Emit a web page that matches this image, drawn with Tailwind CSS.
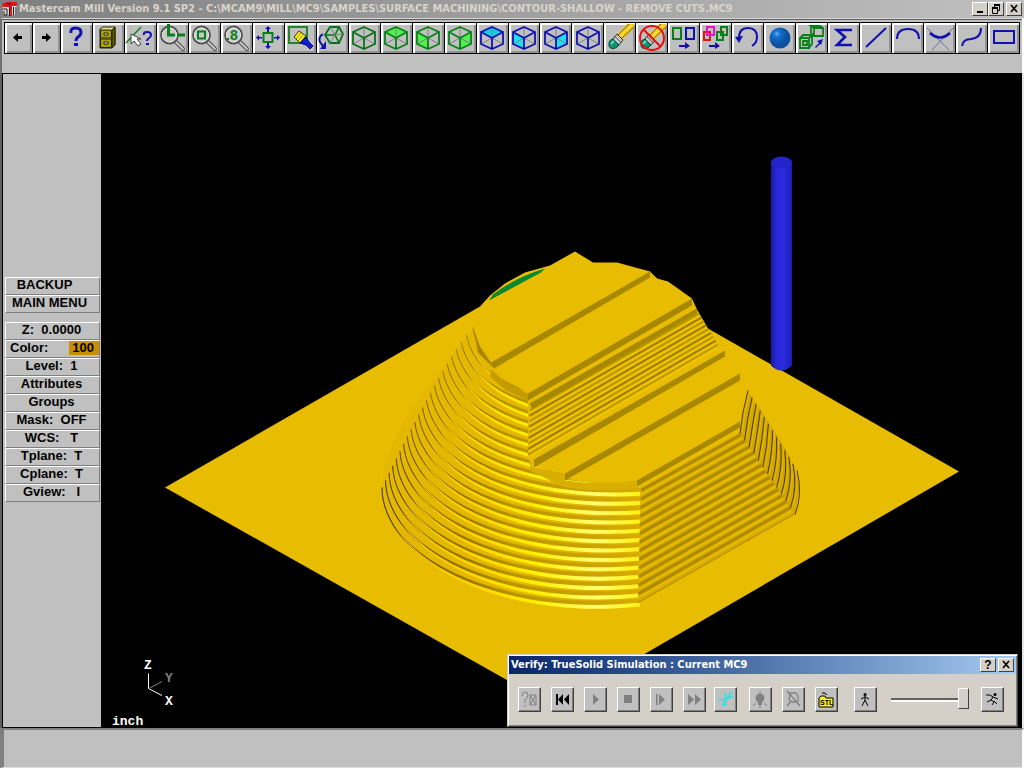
<!DOCTYPE html>
<html lang="en">
<head>
<meta charset="utf-8">
<title>Mastercam Mill Version 9.1 SP2</title>
<script src="https://cdn.jsdelivr.net/npm/@tailwindcss/browser@4"></script>
</head>
<body class="flex h-screen flex-col overflow-hidden bg-[#c0c0c0] font-['Liberation_Sans',Arial,sans-serif] text-black">

<svg class="hidden" aria-hidden="true">
  <symbol id="wire" viewBox="0 0 30 30">
    <path d="M15 4V15M4 21L15 15L26 21" fill="none" stroke="#808080" stroke-width="1"/>
    <path d="M15 4L26 9V21L15 26L4 21V9ZM4 9L15 15L26 9M15 15V26" fill="none" stroke="currentColor" stroke-width="1.8"/>
  </symbol>
  <symbol id="lens" viewBox="0 0 30 30">
    <path d="M19 19L26 26" stroke="#505050" stroke-width="4" stroke-linecap="round"/>
    <path d="M19 19L26 26" stroke="#c8c8c8" stroke-width="2" stroke-linecap="round"/>
    <circle cx="12.500" cy="12" r="8.500" fill="#c8c8c8" stroke="#505050" stroke-width="1.800"/>
    <circle cx="12.500" cy="12" r="7" fill="none" stroke="#e8e8e8"/>
  </symbol>
  <symbol id="pencil" viewBox="0 0 30 30">
    <path d="M12 11L22 1H29V5L17 17Z" fill="#f4c818"/>
    <path d="M13 12L24 1M16 16L29 4" stroke="#806000" stroke-width="1"/>
    <path d="M14.500 14L27 2" stroke="#fff080" stroke-width="1"/>
    <path d="M8 16L12 11L18 17L14 22Z" fill="#c8c8c8" stroke="#303030"/>
    <path d="M10 13.500L16 19.500" stroke="#505050"/>
    <path d="M4 20Q4 17 8 16L14 22Q12 25 9 25.500Q3 26 4 20Z" fill="#109070" stroke="#004838"/>
    <path d="M6 21L9 18" stroke="#60e0b0" stroke-width="2"/>
  </symbol>
</svg>

<header class="flex h-[18px] shrink-0 items-center bg-linear-to-r from-[#808080] to-[#c0c0c0] pl-0.5 pr-0.5">
  <svg class="h-4 w-4 shrink-0" viewBox="0 0 16 16" aria-hidden="true">
    <path d="M1 3H15V14H1Z" fill="#d8d8d8"/><path d="M0 3L5 1H15V5H10V15H7V6H1Z" fill="#d81818"/><path d="M1 8H5V14H2V10M7.500 6V15M11.500 6V14M14 6V14M5 3H9" stroke="#202020" fill="none"/>
  </svg>
  <h1 class="min-w-0 flex-1 overflow-hidden pl-px font-['DejaVu_Sans_Condensed','DejaVu_Sans',sans-serif] text-[11px] leading-4 font-bold whitespace-nowrap text-[#d8d4cc]">Mastercam Mill Version 9.1 SP2 - C:\MCAM9\MILL\MC9\SAMPLES\SURFACE MACHINING\CONTOUR-SHALLOW - REMOVE CUTS.MC9</h1>
  <div class="flex [&>button]:flex [&>button]:h-3.5 [&>button]:w-4 [&>button]:items-center [&>button]:justify-center [&>button]:border [&>button]:border-t-white [&>button]:border-l-white [&>button]:border-r-[#404040] [&>button]:border-b-[#404040] [&>button]:bg-[#d4d0c8]">
    <button aria-label="Minimize"><svg class="h-3 w-3" viewBox="0 0 12 12"><path d="M3 9H9" stroke="#000" stroke-width="2"/></svg></button>
    <button aria-label="Restore"><svg class="h-3 w-3" viewBox="0 0 12 12"><path d="M4 2.500H10M4 1.500H10M4.500 1V4M9.500 1V7.500H8M2 5.500H8M2 4.500H8M2.500 4V10.500H7.500V4" fill="none" stroke="#000"/></svg></button>
    <button class="ml-0.5" aria-label="Close"><svg class="h-3 w-3" viewBox="0 0 12 12"><path d="M3 2L9 9M9 2L3 9" stroke="#000" stroke-width="1.600"/></svg></button>
  </div>
</header>

<nav aria-label="Toolbar" class="h-[55px] shrink-0 border-t border-t-[#d8d8d8] border-r-2 border-r-white border-l-2 border-l-[#707070] pr-0.5 pl-0.5 shadow-[inset_0_1px_#606060]">
  <div class="mt-[3px] flex h-8 gap-px bg-black p-px [&>button]:flex [&>button]:min-w-0 [&>button]:flex-[31_1_0] [&>button]:items-center [&>button]:justify-center [&>button]:overflow-hidden [&>button]:bg-[#c0c0c0] [&>button]:shadow-[inset_2px_2px_#fff,inset_-2px_-2px_#909090] [&>button>svg]:h-[30px] [&>button>svg]:w-[30px] [&>button>svg]:shrink-0">
    <button class="!flex-[27_1_0]" aria-label="Previous"><svg viewBox="0 0 30 30"><path d="M10 14.500L15 10V13H19V16H15V19Z"/></svg></button>
    <button class="!flex-[27_1_0]" aria-label="Next"><svg viewBox="0 0 30 30"><path d="M20 14.500L15 10V13H11V16H15V19Z"/></svg></button>
    <button aria-label="Help"><svg viewBox="0 0 30 30"><path d="M10 10Q9 5 14.500 5Q20 5 20 9.500Q20 12 17 14Q15 15.500 15 18" fill="none" stroke="#1010b0" stroke-width="3"/><rect x="13" y="20" width="4" height="3" fill="#1010b0"/></svg></button>
    <button aria-label="File"><svg viewBox="0 0 30 30"><path d="M7 6L10 4H22V22L19 25H7Z" fill="#e8e4a0" stroke="#202000"/><path d="M19 7L22 4V22L19 25Z" fill="#605c00" stroke="#202000"/><path d="M7.500 7H18.500V15H7.500ZM7.500 16H18.500V24.500H7.500Z" fill="#a8a000" stroke="#202000"/><path d="M11 10H15V12H11ZM11 19H15V21H11Z" fill="#fff" stroke="#202000"/></svg></button>
    <button aria-label="Analyze"><svg viewBox="0 0 30 30"><path d="M1 20L16 4" stroke="#108018" stroke-width="1.500"/><path d="M6 11V21L9 18L13 23L16 21L12 16H16Z" fill="#fff" stroke="#404040"/><path d="M19 12Q18 9 22 9Q26 9 26 12Q26 14 23.500 15.500Q22 16.500 22 18" fill="none" stroke="#1010b0" stroke-width="2"/><path d="M21 20H24V22H21Z" fill="#1010b0"/></svg></button>
    <button aria-label="Zoom window"><svg viewBox="0 0 30 30"><use href="#lens"/><path d="M11.500 1V12H18M20 12H28" fill="none" stroke="#088018" stroke-width="3"/></svg></button>
    <button aria-label="Unzoom"><svg viewBox="0 0 30 30"><use href="#lens"/><rect x="9" y="8.500" width="7" height="7" fill="none" stroke="#088018" stroke-width="2"/></svg></button>
    <button aria-label="Unzoom 0.8"><svg viewBox="0 0 30 30"><use href="#lens"/><text x="9" y="17" font-family="Liberation Sans" font-size="14" font-weight="bold" fill="#088018">8</text><path d="M6 15H8V17H6Z" fill="#088018"/></svg></button>
    <button aria-label="Fit"><svg viewBox="0 0 30 30"><rect x="10.500" y="10" width="9" height="9" fill="none" stroke="#088018" stroke-width="2"/><path d="M15 3L18 6H16V9H14V6H12ZM15 26L18 23H16V20H14V23H12ZM3 14.500L6 12V14H9V15.500H6V17.500ZM27 14.500L24 12V14H21V15.500H24V17.500Z" fill="#1010b0"/></svg></button>
    <button aria-label="Repaint"><svg viewBox="0 0 30 30"><rect x="4" y="4" width="18" height="16" fill="none" stroke="#108018" stroke-width="1.800"/><path d="M9 14L14 8L21 13L15 20Z" fill="#f8f020" stroke="#403800"/><path d="M11 16L17 9M13 18L19 11" stroke="#706800" stroke-width=".7"/><path d="M15 20L21 14L24 19L28 23L25 26L21 22Z" fill="#1020d0" stroke="#000070"/></svg></button>
    <button aria-label="Rotate view"><svg viewBox="0 0 30 30"><path d="M8 12L13 4H22L26 11L22 20H13Z" fill="none" stroke="#087018" stroke-width="1.800"/><path d="M8 12H18L22 4M18 12L22 20" fill="none" stroke="#087018" stroke-width="1.600"/><path d="M13 4L18 12L26 11M18 12L13 20" fill="none" stroke="#609060"/><path d="M6 11Q1 14 3 19L6 23" fill="none" stroke="#1010b0" stroke-width="2"/><path d="M9 18V26H3Z" fill="#1010b0"/></svg></button>
    <button class="text-[#087018]" aria-label="Isometric view"><svg viewBox="0 0 30 30"><use href="#wire"/></svg></button>
    <button class="text-[#088018]" aria-label="Top view"><svg viewBox="0 0 30 30"><path d="M15 4L26 9L15 15L4 9Z" fill="#50f050"/><use href="#wire"/></svg></button>
    <button class="text-[#088018]" aria-label="Front view"><svg viewBox="0 0 30 30"><path d="M4 9L15 15V26L4 21Z" fill="#50f050"/><use href="#wire"/></svg></button>
    <button class="text-[#088018]" aria-label="Side view"><svg viewBox="0 0 30 30"><path d="M26 9L15 15V26L26 21Z" fill="#50f050"/><use href="#wire"/></svg></button>
    <button class="text-[#1010b0]" aria-label="Top plane"><svg viewBox="0 0 30 30"><path d="M15 4L26 9L15 15L4 9Z" fill="#10d0e8"/><use href="#wire"/></svg></button>
    <button class="text-[#1010b0]" aria-label="Front plane"><svg viewBox="0 0 30 30"><path d="M4 9L15 15V26L4 21Z" fill="#20e0f0"/><use href="#wire"/></svg></button>
    <button class="text-[#1010b0]" aria-label="Side plane"><svg viewBox="0 0 30 30"><path d="M26 9L15 15V26L26 21Z" fill="#20e0f0"/><use href="#wire"/></svg></button>
    <button class="text-[#1010b0]" aria-label="3D plane"><svg viewBox="0 0 30 30"><use href="#wire"/></svg></button>
    <button aria-label="Delete"><svg viewBox="0 0 30 30"><use href="#pencil"/></svg></button>
    <button aria-label="Undelete"><svg viewBox="0 0 30 30"><use href="#pencil"/><circle cx="15" cy="15" r="12" fill="none" stroke="#e81010" stroke-width="2"/><path d="M6.500 6.500L23.500 23.500" stroke="#e81010" stroke-width="2"/></svg></button>
    <button aria-label="Copy"><svg viewBox="0 0 30 30"><rect x="4" y="5" width="8" height="11" fill="none" stroke="#088018" stroke-width="2"/><rect x="17" y="5" width="8" height="11" fill="none" stroke="#1010b0" stroke-width="2"/><path d="M10 22H16V19L21 23L16 26V24H10Z" fill="#1010b0"/></svg></button>
    <button aria-label="Translate"><svg viewBox="0 0 30 30"><path d="M3 9H9V17H3Z" fill="none" stroke="#e81010" stroke-width="2"/><path d="M6 4H13V12H6Z" fill="none" stroke="#e810d0" stroke-width="2"/><path d="M16 9H22V17H16ZM20 4H26V12H20Z" fill="none" stroke="#088018" stroke-width="2"/><path d="M8 22H14V19L19 23L14 26V24H8Z" fill="#1010b0"/></svg></button>
    <button aria-label="Undo"><svg viewBox="0 0 30 30"><path d="M6 15Q6 5 15 5Q24 5 24 14Q24 20 19 23" fill="none" stroke="#1010b0" stroke-width="2"/><path d="M2 14L10 13L6 20Z" fill="#1010b0"/></svg></button>
    <button aria-label="Shade"><svg viewBox="0 0 30 30"><defs><radialGradient id="ball" cx=".35" cy=".3"><stop offset="0" stop-color="#58b8f8"/><stop offset=".3" stop-color="#1870d0"/><stop offset="1" stop-color="#0c50a0"/></radialGradient></defs><circle cx="15" cy="15" r="10.500" fill="url(#ball)"/></svg></button>
    <button aria-label="Transform"><svg viewBox="0 0 30 30"><path d="M3 15H12V25H3ZM3 15L6 12H15V21L12 25M12 15L15 12M6 18H10V22H6ZM17 5H26V13H17ZM17 5L14 3H23L26 5M14 3V10L17 13" fill="none" stroke="#088018" stroke-width="1.800"/><path d="M18 24L22 20L20 18L26 16L24 22L23 21L19 25Z" fill="#1010b0"/></svg></button>
    <button aria-label="Sum"><svg viewBox="0 0 30 30"><path d="M23 7H8L16 14L8 22H23" fill="none" stroke="#1010b0" stroke-width="2.600"/></svg></button>
    <button aria-label="Line"><svg viewBox="0 0 30 30"><path d="M5 24L25 5" stroke="#1010b0" stroke-width="2"/></svg></button>
    <button aria-label="Arc"><svg viewBox="0 0 30 30"><path d="M4 16Q4 6 15 6Q26 6 26 16" fill="none" stroke="#1010b0" stroke-width="2"/></svg></button>
    <button aria-label="Fillet"><svg viewBox="0 0 30 30"><path d="M2 5L24 27M28 5L7 27" stroke="#707098"/><path d="M5 10Q15 19 25 10" fill="none" stroke="#1010b0" stroke-width="2.600"/></svg></button>
    <button aria-label="Spline"><svg viewBox="0 0 30 30"><path d="M5 23Q6 16 14 16Q24 15 24 5" fill="none" stroke="#1010b0" stroke-width="2"/></svg></button>
    <button aria-label="Rectangle"><svg viewBox="0 0 30 30"><rect x="5" y="8" width="20" height="12" fill="none" stroke="#1010b0" stroke-width="2"/></svg></button>
  </div>
</nav>

<main class="flex min-h-0 flex-1 border-r-2 border-l-2 border-r-[#e8e8e8] border-l-[#606060]">
  <aside class="w-[99px] shrink-0 border-t border-b border-l border-black pt-[203px] pr-px pl-0.5 text-[13px] font-bold">
    <div class="flex flex-col [&>button]:flex [&>button]:h-[18px] [&>button]:items-center [&>button]:justify-center [&>button]:border [&>button]:border-t-white [&>button]:border-l-white [&>button]:border-r-[#808080] [&>button]:border-b-[#808080] [&>button]:leading-[14px] [&>button]:pb-0.5 [&>button]:whitespace-pre">
      <button class="pr-4">BACKUP</button>
      <button class="pr-1.5">MAIN MENU</button>
      <button class="mt-[9px] pr-0.5">Z:  0.0000</button>
      <button class="!justify-between pl-1"><span>Color:</span><span class="bg-[#c89000] pr-[5px] pl-[3px]">100</span></button>
      <button class="pr-0.5">Level:  1</button>
      <button class="pr-0.5">Attributes</button>
      <button class="pr-0.5">Groups</button>
      <button class="pr-0.5">Mask:  OFF</button>
      <button class="pr-0.5">WCS:   T</button>
      <button class="pr-0.5">Tplane:  T</button>
      <button class="pr-0.5">Cplane:  T</button>
      <button class="pr-0.5">Gview:   I</button>
    </div>
  </aside>

  <section aria-label="Graphics view" class="relative min-w-0 flex-1 bg-black">
    <svg class="block h-full w-full" viewBox="101 73 921 654" role="img" aria-label="Machined part">
      <defs>
        <linearGradient id="rod"><stop offset="0" stop-color="#1818a0"/><stop offset=".25" stop-color="#2828d8"/><stop offset=".6" stop-color="#2c2ce0"/><stop offset="1" stop-color="#1c1cb0"/></linearGradient>
        <linearGradient id="shine" gradientUnits="userSpaceOnUse" x1="382" y1="0" x2="642" y2="0"><stop offset="0" stop-color="#e8bc00"/><stop offset=".3" stop-color="#ffd000"/><stop offset=".6" stop-color="#fff000"/><stop offset=".82" stop-color="#ffff70"/><stop offset="1" stop-color="#fff010"/></linearGradient>
        <linearGradient id="groove" gradientUnits="userSpaceOnUse" x1="382" y1="0" x2="642" y2="0"><stop offset="0" stop-color="#382800"/><stop offset=".2" stop-color="#806400"/><stop offset=".5" stop-color="#b89400"/><stop offset="1" stop-color="#d8ac00"/></linearGradient>
      </defs>
      <path fill="#e8bc00" d="M165 487L480 306L490 295L505 283L525 272L550 265L575 251L593 262L617 262L650 271V276L668 281L692 298L697 309L708 328L959 471L554 706Z"/>
      <path fill="#088830" d="M489 300L493 294Q515 277 545 268L541 272Z"/>
      <path fill="#e4b800" d="M473 327C450 362 382 430 382 487C382 560 500 618 640 603V400Z"/>
      <g id="flutes"></g>
      <path fill="#e8bc00" d="M473 327L491 362L494 368L528 394V458L534 466L565 478L600 484L641 486L743 430L748 390L708 328L650 271Z"/>
      <g id="cliff" fill="none"></g>
      <g fill="#a88800">
        <path d="M491 362L650 271V277L494 368Z"/>
        <path d="M528 393L692 298V305L528 400Z"/>
        <path d="M531 403L697 308V313L531 409Z"/>
        <path d="M534 459L725 350V356L534 467Z"/>
        <path d="M565 473L740 373V380L565 480Z"/>
        <path d="M637 480L740 421V427L637 486Z"/>
      </g>
      <path fill="#a88400" d="M473 327L480 346L491 362L494 368L478 352Z"/>
      <path fill="#c49c00" d="M491 369L508 384L528 393V400L506 390L490 376Z"/>
      <path fill="#d8ae00" d="M530 461L534 467L565 473V480Q600 485 637 480V487Q600 493 562 486L530 470Z"/>
      <path fill="#d8ac00" d="M641 487L743 430L795 514L638 603Z"/>
      <g id="face" fill="none"></g>
      <path fill="#d0a600" d="M748 390C765 420 805 465 798 495L795 514L740 433Z"/>
      <g id="side" fill="none"></g>
      <path fill="url(#rod)" d="M771 162V365Q781 375 792 365V162Z"/>
      <ellipse cx="781.500" cy="162" rx="10.500" ry="6" fill="#2424c8"/>
      <path d="M148.500 673V688L162 695" fill="none" stroke="#fff"/>
      <path d="M149 688L162 681" stroke="#808080"/>
      <g font-family="Liberation Mono" font-size="13" font-weight="bold" fill="#fff">
        <text x="144" y="668">Z</text><text x="165" y="681" fill="#808080">Y</text><text x="165" y="704">X</text><text x="112" y="724">inch</text>
      </g>
    </svg>

    <div role="dialog" aria-labelledby="verify-title" class="absolute right-1 bottom-px w-[511px] border border-t-[#d4d0c8] border-l-[#d4d0c8] border-r-[#404040] border-b-[#404040] bg-[#d4d0c8] p-px shadow-[inset_1px_1px_#fff,inset_-1px_-1px_#808080]">
      <div class="flex h-[18px] items-center bg-linear-to-r from-[#0a246a] to-[#a6caf0] pr-0.5 pl-0.5">
        <h2 id="verify-title" class="flex-1 font-['DejaVu_Sans_Condensed','DejaVu_Sans',sans-serif] text-[11px] leading-4 font-bold whitespace-nowrap text-white">Verify: TrueSolid Simulation : Current MC9</h2>
        <div class="flex gap-0.5 [&>button]:flex [&>button]:h-3.5 [&>button]:w-4 [&>button]:items-center [&>button]:justify-center [&>button]:border [&>button]:border-t-white [&>button]:border-l-white [&>button]:border-r-[#404040] [&>button]:border-b-[#404040] [&>button]:bg-[#d4d0c8]">
          <button class="text-[12px] leading-3 font-bold" aria-label="Help">?</button>
          <button aria-label="Close"><svg class="h-3 w-3" viewBox="0 0 12 12"><path d="M3 2L9 9M9 2L3 9" stroke="#000" stroke-width="1.600"/></svg></button>
        </div>
      </div>
      <div class="flex h-[51px] items-center gap-2.5 pl-[9px] [&>*]:shrink-0 [&>button]:h-[25px] [&>button]:w-[23px] [&>button]:border [&>button]:border-t-white [&>button]:border-l-white [&>button]:border-r-[#404040] [&>button]:border-b-[#404040] [&>button]:bg-[#c0c0c0] [&>button]:shadow-[inset_-1px_-1px_#808080] [&>button>svg]:h-[23px] [&>button>svg]:w-[21px]">
        <button aria-label="Configure"><svg viewBox="0 0 21 23"><path d="M3 8Q3 4 6 4Q9 4 9 7Q9 9 6 12V15M6 17V19M11 7H17V17H11ZM11 7L17 17M17 7L11 17" fill="none" stroke="#808080"/></svg></button>
        <button aria-label="Restart"><svg viewBox="0 0 21 23"><path d="M4 6H6V17H4ZM11 6V17L6 11.500ZM17 6V17L12 11.500Z"/></svg></button>
        <button aria-label="Machine"><svg viewBox="0 0 21 23"><path d="M8 6L14 11.500L8 17Z" fill="#808080"/></svg></button>
        <button aria-label="Stop"><svg viewBox="0 0 21 23"><path d="M6 7H14V15H6Z" fill="#808080"/></svg></button>
        <button aria-label="Step"><svg viewBox="0 0 21 23"><path d="M5 6H6.500V17H5ZM8 6L14 11.500L8 17Z" fill="#808080"/></svg></button>
        <button aria-label="Fast forward"><svg viewBox="0 0 21 23"><path d="M4 6L10 11.500L4 17ZM11 6L17 11.500L11 17Z" fill="#808080"/></svg></button>
        <button class="-ml-0.5" aria-label="Tool"><svg viewBox="0 0 21 23"><path d="M17 4L10 12M18 8L10 12M3 11L10 12L8 17L11 17V13M11 5L10 10" fill="none" stroke="#20e8e0" stroke-width="1.500"/></svg></button>
        <button class="ml-0.5" aria-label="Light"><svg viewBox="0 0 21 23"><path d="M10 3V7M3 18L6 15M17 18L14 15M10 16V20" stroke="#808080"/><circle cx="10" cy="10" r="4.500" fill="#808080"/><path d="M8 13H12V17H8Z" fill="#808080"/></svg></button>
        <button aria-label="Section"><svg viewBox="0 0 21 23"><path d="M4 3L17 18M4 18L8 13" fill="none" stroke="#808080" stroke-width="1.300"/><path d="M7 5H13L15 8V13L12 14H8L6 11Z" fill="none" stroke="#808080" stroke-width="1.300"/></svg></button>
        <button aria-label="Save STL"><svg viewBox="0 0 21 23"><path d="M3 10L5 8H9L10 10H17V19H3Z" fill="#f8f020" stroke="#000"/><path d="M6 5H9L11 7" fill="none" stroke="#000"/><text x="4" y="17" font-family="Liberation Sans" font-size="7" font-weight="bold">STL</text></svg></button>
        <button class="ml-1.5" aria-label="Slow"><svg viewBox="0 0 21 23"><circle cx="10" cy="6.500" r="1.500"/><path d="M10 8V12L7 18M10 12L13 18M6 11L10 9L14 11" fill="none" stroke="#000"/></svg></button>
        <input type="range" aria-label="Speed" min="0" max="100" value="100" class="ml-1 h-6 w-[78px] appearance-none bg-transparent [&::-webkit-slider-runnable-track]:h-1 [&::-webkit-slider-runnable-track]:border-t-2 [&::-webkit-slider-runnable-track]:border-b-2 [&::-webkit-slider-runnable-track]:border-t-[#606060] [&::-webkit-slider-runnable-track]:border-b-white [&::-webkit-slider-thumb]:-mt-3 [&::-webkit-slider-thumb]:h-[21px] [&::-webkit-slider-thumb]:w-[11px] [&::-webkit-slider-thumb]:appearance-none [&::-webkit-slider-thumb]:border [&::-webkit-slider-thumb]:border-t-white [&::-webkit-slider-thumb]:border-l-white [&::-webkit-slider-thumb]:border-r-[#404040] [&::-webkit-slider-thumb]:border-b-[#404040] [&::-webkit-slider-thumb]:bg-[#d4d0c8]">
        <button class="ml-0.5" aria-label="Fast"><svg viewBox="0 0 21 23"><circle cx="13" cy="6.500" r="1.500"/><path d="M4 7H8L11 9L9 12L12 14L10 17M9 12L5 14M11 9L16 11M12 13L15 16" fill="none" stroke="#000"/></svg></button>
      </div>
    </div>
  </section>
</main>

<footer class="h-10 shrink-0 border-t-2 border-r-2 border-b border-l-4 border-t-[#808080] border-r-white border-b-[#e0e0e0] border-l-[#808080]"></footer>

<script>
  const mix = (a, b, t) => a + (b - a) * t;
  const point = (p, q, t) => mix(p[0], q[0], t).toFixed(1) + ' ' + mix(p[1], q[1], t).toFixed(1);
  const add = (id, d, attrs) => {
    const path = document.createElementNS('http://www.w3.org/2000/svg', 'path');
    path.setAttribute('d', d);
    for (const name in attrs) path.setAttribute(name, attrs[name]);
    document.getElementById(id).append(path);
  };
  const line = (id, d, stroke, width) => add(id, d, { stroke, 'stroke-width': width });
  // Left flank: 22 stepped contours between the top rim and the base.
  // Each groove and highlight is a band that tapers towards the silhouette.
  for (let i = 0; i <= 22; i++) {
    const t = i / 22;
    const band = (x, from, to) => {
      const s = [mix(473, 382, Math.pow(t, .85)) + x, mix(327, 487, t)].join(' ');
      const edge = dy => [
        point([478 + x, 365 + dy / 2], [382 + x, 560 + dy / 2], t),
        point([520, 400 + dy], [500, 618 + dy], t),
        point([640, 400 + dy], [640, 603 + dy], t)
      ];
      const a = edge(from), b = edge(to);
      return `M${s}C${a.join(' ')}L${b[2]}C${b[1]} ${b[0]} ${s}Z`;
    };
    add('flutes', band(0, -5, -1), { fill: 'url(#groove)', stroke: 'url(#groove)', 'stroke-width': .6 });
    add('flutes', band(2, -1, 3), { fill: 'url(#shine)' });
  }
  // Upper cliff between the two terraces.
  for (let i = 0; i < 10; i++) {
    const t = i / 9;
    line('cliff', `M${point([530, 404], [528, 454], t)}L${point([697, 309], [718, 344], t)}`, i % 2 ? '#b89600' : '#9c7c00', 2);
    line('cliff', `M${point([530, 408], [528, 457], t)}L${point([697, 312], [718, 347], t)}`, '#f8cc00', 1);
  }
  // Front right face.
  for (let i = 0; i <= 13; i++) {
    const t = i / 13;
    line('face', `M${point([641, 490], [638, 602], t)}L${point([743, 433], [795, 513], t)}`, '#ac8a00', i === 13 ? 1 : 3);
    if (i < 13) line('face', `M${point([641, 494], [638, 606], t)}L${point([743, 437], [795, 517], t)}`, '#f4c800', 1);
  }
  // Rounded right flank.
  for (let i = 0; i <= 12; i++) {
    const t = i / 12;
    const curve = dx => `M${point([748 + dx, 390], [797 + dx, 470], t)}Q${point([742 + dx, 412], [803 + dx, 494], t)} ${point([740 + dx, 433], [795 + dx, 514], t)}`;
    line('side', curve(0), '#4c3800', 1);
    line('side', curve(2), '#e8bc00', 1);
  }
</script>
</body>
</html>
